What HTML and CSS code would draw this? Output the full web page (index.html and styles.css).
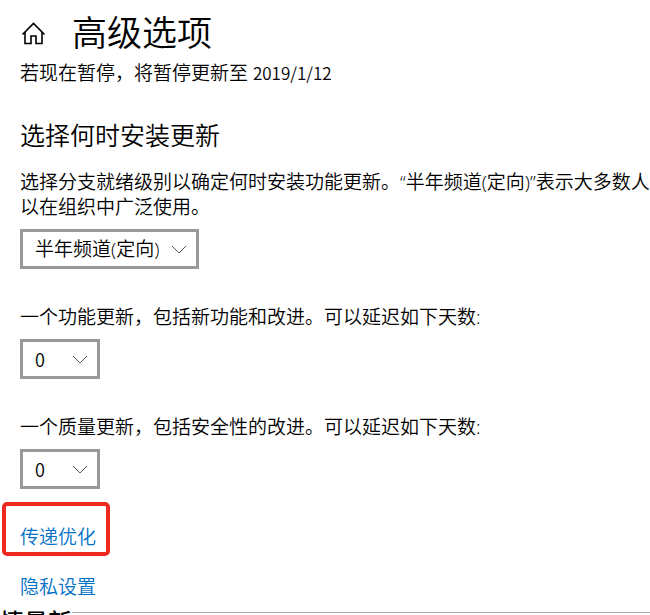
FILE: index.html
```html
<!DOCTYPE html>
<html lang="zh-CN">
<head>
    <meta charset="UTF-8">
    <meta name="viewport" content="width=device-width, initial-scale=1.0">
    <title>高级选项</title>
    <link rel="stylesheet" href="styles.css">
</head>
<body>
    <main class="settings">
        <header class="page-header">
            <a class="home" href="#" aria-label="主页">
                <svg width="26" height="26" viewBox="0 0 26 26" fill="none" stroke="#000" stroke-width="1.6">
                    <path d="M2.5 14.5 L13.5 3.5 L24.5 14.5"/>
                    <path d="M5 12 V23.5 H11 V16 H16 V23.5 H22 V12"/>
                </svg>
            </a>
            <h1>高级选项</h1>
        </header>
        <p class="pause-note">若现在暂停，将暂停更新至 <span class="latin">2019/1/12</span></p>

        <h2>选择何时安装更新</h2>

        <div class="field">
            <label for="branch">选择分支就绪级别以确定何时安装功能更新。“半年频道(定向)”表示大多数人都可<br>以在组织中广泛使用。</label>
            <div class="select wide">
                <select id="branch">
                    <option>半年频道(定向)</option>
                    <option>半年频道</option>
                </select>
                <svg class="chevron" width="16" height="9" viewBox="0 0 16 9" fill="none" stroke="#555"><path d="M1 1 L8 8 L15 1"/></svg>
            </div>
        </div>

        <div class="field">
            <label for="featureDays">一个功能更新，包括新功能和改进。可以延迟如下天数:</label>
            <div class="select">
                <select id="featureDays" class="latin">
                    <option>0</option>
                    <option>1</option>
                </select>
                <svg class="chevron" width="16" height="9" viewBox="0 0 16 9" fill="none" stroke="#555"><path d="M1 1 L8 8 L15 1"/></svg>
            </div>
        </div>

        <div class="field">
            <label for="qualityDays">一个质量更新，包括安全性的改进。可以延迟如下天数:</label>
            <div class="select">
                <select id="qualityDays" class="latin">
                    <option>0</option>
                    <option>1</option>
                </select>
                <svg class="chevron" width="16" height="9" viewBox="0 0 16 9" fill="none" stroke="#555"><path d="M1 1 L8 8 L15 1"/></svg>
            </div>
        </div>

        <nav class="links">
            <a class="marked" href="#">传递优化</a>
            <a href="#">隐私设置</a>
        </nav>
    </main>
    <footer class="next-section">
        <span>情最新</span>
        <hr>
    </footer>
</body>
</html>
```

FILE: styles.css
```css
* {
    box-sizing: border-box;
}

body {
    margin: 0;
    font-family: "Open Sans", "Noto Sans CJK SC", sans-serif;
    font-size: 19px;
    font-weight: 350;
    line-height: 25px;
    color: #000;
    background-color: #fff;
    overflow: hidden;
}

h1,
h2,
p {
    margin: 0;
    font-weight: 350;
}

.settings {
    padding: 8px 0 0 20px;
}

.page-header {
    display: flex;
    align-items: center;
    gap: 26px;
}

.home {
    display: flex;
}

h1 {
    font-size: 35px;
    line-height: 50px;
}

.pause-note {
    margin-top: 2px;
}

.latin {
    font-family: "Noto Sans CJK SC", sans-serif;
    font-size: 17px;
}

h2 {
    margin-top: 31px;
    font-size: 25px;
    line-height: 36px;
}

.field {
    margin-bottom: 36px;
}

h2 + .field {
    margin-top: 17px;
}

.field label {
    display: block;
    overflow: hidden;
    white-space: nowrap;
}

.select {
    display: grid;
    align-items: center;
    width: 80px;
    margin-top: 9px;
}

.select.wide {
    width: 179px;
}

.select select,
.chevron {
    grid-area: 1 / 1;
}

.select select {
    appearance: none;
    width: 100%;
    height: 40px;
    padding: 0 12px;
    border: 3px solid #999;
    border-radius: 0;
    background-color: #fff;
    color: #000;
    font-family: inherit;
    font-size: 19px;
    font-weight: inherit;
}

.select .latin {
    font-family: "Noto Sans CJK SC", sans-serif;
    font-size: 18px;
}

.chevron {
    justify-self: end;
    margin-right: 12px;
    pointer-events: none;
}

.links {
    display: flex;
    flex-direction: column;
    align-items: flex-start;
    gap: 19px;
}

.links a {
    color: #0070c8;
    text-decoration: none;
}

.links .marked {
    margin: -23px 0 0 -18px;
    padding: 19px 10px 2px 14px;
    border: 4px solid #ec2a20;
    border-radius: 5px;
}

.next-section {
    display: flex;
    height: 7px;
    margin-top: 8px;
    overflow: hidden;
    font-size: 24px;
    font-weight: 500;
    line-height: 28px;
}

.next-section hr {
    flex: 1;
    height: 1px;
    margin: 4px 0 0;
    border: 0;
    background-color: #aaa;
}
```
